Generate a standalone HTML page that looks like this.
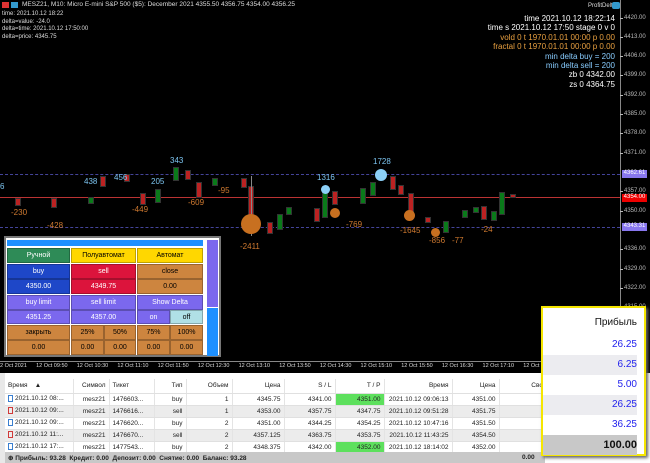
<!DOCTYPE html>
<html><head><meta charset="utf-8"><style>
*{margin:0;padding:0;box-sizing:border-box}
body{width:650px;height:463px;background:#000;position:relative;overflow:hidden;font-family:"Liberation Sans",sans-serif;font-size:7px;color:#fff}
.a{position:absolute}
.pl{position:absolute;left:624px;font-size:6px;color:#bbb}
.pl:before{content:"";position:absolute;left:-4px;top:3px;width:3px;height:1px;background:#bbb}
.c{position:absolute;border:1px solid #333}
.g{background:#0a7a1a}.r{background:#b22}
.w{position:absolute;width:1px;background:#888}
.lb{position:absolute;font-size:8px}
.bl{color:#7cc4f0}.or{color:#d07a30}
.b{position:absolute;display:flex;align-items:center;justify-content:center;font-size:7px;color:#fff;border:1px solid rgba(0,0,0,.25)}
table{border-collapse:collapse;table-layout:fixed}
.t td{height:12px;font-size:6.5px;color:#222;padding:0 3px;white-space:nowrap;overflow:hidden;border-right:1px solid #e4e4e4;border-bottom:1px solid #e0e0e0}
.t tr{height:12px}
.ib,.is{display:inline-block;width:5px;height:7px;vertical-align:middle;margin-right:2px}
.ib{border:1px solid #3a7fd0}.is{border:1px solid #d03a3a}
</style></head><body>
<div class="a" style="left:2px;top:2px;width:7px;height:6px;background:#d33"></div>
<div class="a" style="left:11px;top:2px;width:7px;height:6px;background:#39c"></div>
<div class="a" style="left:22px;top:1px;font-size:6.5px;color:#ddd">MESZ21, M10: Micro E-mini S&amp;P 500 ($5): December 2021 4355.50 4356.75 4354.00 4356.25</div>
<div class="a" style="left:2px;top:11px;font-size:6px;line-height:7.5px;color:#ddd">time: 2021.10.12 18:22<br>delta=value: -24.0<br>delta=time: 2021.10.12 17:50:00<br>delta=price: 4345.75</div>
<div class="a" style="left:588px;top:3px;font-size:6px;color:#ddd">ProfitDelta</div>
<div class="a" style="left:612px;top:2px;width:8px;height:7px;background:#39c;border-radius:2px"></div>
<div class="a" style="right:35px;top:14px;text-align:right;font-size:8px;line-height:9.4px;color:#fff">time 2021.10.12 18:22:14<br>time s 2021.10.12 17:50 stage 0 v 0<br><span style="color:#e9a040">vold 0 t 1970.01.01 00:00 p 0.00<br>fractal 0 t 1970.01.01 00:00 p 0.00</span><br><span style="color:#8cf">min delta buy = 200<br>min delta sell = 200</span><br>zb 0 4342.00<br>zs 0 4364.75</div>
<div class="a" style="left:620px;top:0;width:1px;height:373px;background:#888"></div>
<div class="pl" style="top:15px">4420.00</div><div class="pl" style="top:34px">4413.00</div><div class="pl" style="top:53px">4406.00</div><div class="pl" style="top:72px">4399.00</div><div class="pl" style="top:92px">4392.00</div><div class="pl" style="top:111px">4385.00</div><div class="pl" style="top:130px">4378.00</div><div class="pl" style="top:150px">4371.00</div><div class="pl" style="top:188px">4357.00</div><div class="pl" style="top:208px">4350.00</div><div class="pl" style="top:246px">4336.00</div><div class="pl" style="top:266px">4329.00</div><div class="pl" style="top:285px">4322.00</div><div class="pl" style="top:304px">4315.00</div><div class="pl" style="top:324px">4308.00</div><div class="pl" style="top:343px">4301.00</div>
<div class="a" style="left:0;top:174px;width:620px;border-top:1px dashed #44449a"></div>
<div class="a" style="left:0;top:227px;width:620px;border-top:1px dashed #44449a"></div>
<div class="a" style="left:0;top:197px;width:620px;height:1px;background:#b33"></div>
<div class="a" style="left:622px;top:170px;width:25px;height:8px;background:#8877ee;font-size:6px;color:#fff;text-align:center">4362.61</div>
<div class="a" style="left:622px;top:194px;width:25px;height:8px;background:#e00;font-size:6px;color:#fff;text-align:center">4354.00</div>
<div class="a" style="left:622px;top:223px;width:25px;height:8px;background:#8877ee;font-size:6px;color:#fff;text-align:center">4343.31</div>
<div class="c r" style="left:15px;top:198px;width:6px;height:8px"></div>
<div class="c r" style="left:51px;top:198px;width:6px;height:10px"></div>
<div class="c g" style="left:88px;top:197px;width:6px;height:7px"></div>
<div class="c r" style="left:100px;top:176px;width:6px;height:11px"></div>
<div class="c r" style="left:124px;top:174px;width:6px;height:8px"></div>
<div class="c r" style="left:140px;top:193px;width:6px;height:12px"></div>
<div class="c g" style="left:155px;top:189px;width:6px;height:14px"></div>
<div class="c g" style="left:173px;top:167px;width:6px;height:14px"></div>
<div class="c r" style="left:185px;top:170px;width:6px;height:10px"></div>
<div class="c r" style="left:196px;top:182px;width:6px;height:16px"></div>
<div class="c g" style="left:212px;top:178px;width:6px;height:8px"></div>
<div class="c r" style="left:241px;top:178px;width:6px;height:10px"></div>
<div class="c r" style="left:248px;top:186px;width:6px;height:42px"></div>
<div class="w" style="left:251px;top:176px;height:60px"></div>
<div class="c r" style="left:267px;top:222px;width:6px;height:12px"></div>
<div class="c g" style="left:277px;top:214px;width:6px;height:16px"></div>
<div class="c g" style="left:286px;top:207px;width:6px;height:8px"></div>
<div class="c r" style="left:314px;top:208px;width:6px;height:14px"></div>
<div class="c g" style="left:322px;top:186px;width:6px;height:32px"></div>
<div class="c r" style="left:332px;top:191px;width:6px;height:14px"></div>
<div class="c g" style="left:360px;top:188px;width:6px;height:16px"></div>
<div class="c g" style="left:370px;top:182px;width:6px;height:14px"></div>
<div class="c r" style="left:390px;top:176px;width:6px;height:14px"></div>
<div class="c r" style="left:398px;top:185px;width:6px;height:10px"></div>
<div class="c r" style="left:408px;top:193px;width:6px;height:24px"></div>
<div class="c r" style="left:425px;top:217px;width:6px;height:6px"></div>
<div class="c g" style="left:443px;top:221px;width:6px;height:12px"></div>
<div class="c g" style="left:462px;top:210px;width:6px;height:8px"></div>
<div class="c g" style="left:473px;top:207px;width:6px;height:6px"></div>
<div class="c r" style="left:481px;top:206px;width:6px;height:14px"></div>
<div class="c g" style="left:491px;top:211px;width:6px;height:10px"></div>
<div class="c g" style="left:499px;top:192px;width:6px;height:23px"></div>
<div class="c r" style="left:510px;top:194px;width:6px;height:4px"></div>
<div class="a" style="left:241px;top:214px;width:20px;height:20px;border-radius:50%;background:#c87020"></div>
<div class="a" style="left:330px;top:208px;width:10px;height:10px;border-radius:50%;background:#c87020"></div>
<div class="a" style="left:404px;top:210px;width:11px;height:11px;border-radius:50%;background:#c87020"></div>
<div class="a" style="left:431px;top:228px;width:9px;height:9px;border-radius:50%;background:#c87020"></div>
<div class="a" style="left:375px;top:169px;width:12px;height:12px;border-radius:50%;background:#8cd0f8"></div>
<div class="a" style="left:321px;top:185px;width:9px;height:9px;border-radius:50%;background:#8cd0f8"></div>
<div class="lb or" style="left:11px;top:208px">-230</div><div class="lb or" style="left:47px;top:221px">-428</div><div class="lb or" style="left:132px;top:205px">-449</div><div class="lb or" style="left:188px;top:198px">-609</div><div class="lb or" style="left:218px;top:186px">-95</div><div class="lb or" style="left:240px;top:242px">-2411</div><div class="lb or" style="left:346px;top:220px">-769</div><div class="lb or" style="left:400px;top:226px">-1645</div><div class="lb or" style="left:429px;top:236px">-856</div><div class="lb or" style="left:452px;top:236px">-77</div><div class="lb or" style="left:481px;top:225px">-24</div>
<div class="lb bl" style="left:0;top:182px">6</div><div class="lb bl" style="left:84px;top:177px">438</div><div class="lb bl" style="left:114px;top:173px">456</div><div class="lb bl" style="left:151px;top:177px">205</div><div class="lb bl" style="left:170px;top:156px">343</div><div class="lb bl" style="left:317px;top:173px">1316</div><div class="lb bl" style="left:373px;top:157px">1728</div>
<div class="a" style="left:4px;top:236px;width:217px;height:121px;background:#fff;border:2px solid #777"></div>
<div class="a" style="left:7px;top:240px;width:196px;height:6px;background:#1e90ff"></div>
<div class="a" style="left:207px;top:240px;width:11px;height:67px;background:#7b68ee"></div>
<div class="a" style="left:207px;top:308px;width:11px;height:48px;background:#1e90ff"></div>
<div class="b" style="left:7px;top:248px;width:63px;height:15px;background:#2e8b57">Ручной</div>
<div class="b" style="left:71px;top:248px;width:65px;height:15px;background:#ffd700;color:#000">Полуавтомат</div>
<div class="b" style="left:137px;top:248px;width:66px;height:15px;background:#ffd700;color:#000">Автомат</div>
<div class="b" style="left:7px;top:264px;width:63px;height:15px;background:#1e47c8">buy</div>
<div class="b" style="left:7px;top:279px;width:63px;height:15px;background:#1e47c8">4350.00</div>
<div class="b" style="left:71px;top:264px;width:65px;height:15px;background:#dc143c">sell</div>
<div class="b" style="left:71px;top:279px;width:65px;height:15px;background:#dc143c">4349.75</div>
<div class="b" style="left:137px;top:264px;width:66px;height:15px;background:#cd853f;color:#000">close</div>
<div class="b" style="left:137px;top:279px;width:66px;height:15px;background:#cd853f;color:#000">0.00</div>
<div class="b" style="left:7px;top:295px;width:63px;height:15px;background:#7b68ee">buy limit</div>
<div class="b" style="left:7px;top:310px;width:63px;height:14px;background:#7b68ee">4351.25</div>
<div class="b" style="left:71px;top:295px;width:65px;height:15px;background:#7b68ee">sell limit</div>
<div class="b" style="left:71px;top:310px;width:65px;height:14px;background:#7b68ee">4357.00</div>
<div class="b" style="left:137px;top:295px;width:66px;height:15px;background:#7b68ee">Show Delta</div>
<div class="b" style="left:137px;top:310px;width:33px;height:14px;background:#7b68ee">on</div>
<div class="b" style="left:170px;top:310px;width:33px;height:14px;background:#b0e0e6;color:#000">off</div>
<div class="b" style="left:7px;top:325px;width:63px;height:15px;background:#cd853f;color:#000">закрыть</div>
<div class="b" style="left:7px;top:340px;width:63px;height:15px;background:#cd853f;color:#000">0.00</div>
<div class="b" style="left:71px;top:325px;width:33px;height:15px;background:#cd853f;color:#000">25%</div>
<div class="b" style="left:104px;top:325px;width:32px;height:15px;background:#cd853f;color:#000">50%</div>
<div class="b" style="left:137px;top:325px;width:33px;height:15px;background:#cd853f;color:#000">75%</div>
<div class="b" style="left:170px;top:325px;width:33px;height:15px;background:#cd853f;color:#000">100%</div>
<div class="b" style="left:71px;top:340px;width:33px;height:15px;background:#cd853f;color:#000">0.00</div>
<div class="b" style="left:104px;top:340px;width:32px;height:15px;background:#cd853f;color:#000">0.00</div>
<div class="b" style="left:137px;top:340px;width:33px;height:15px;background:#cd853f;color:#000">0.00</div>
<div class="b" style="left:170px;top:340px;width:33px;height:15px;background:#cd853f;color:#000">0.00</div>
<div class="a" style="left:0;top:361px;width:620px;height:1px;background:#888"></div>
<div class="a" style="left:0;top:363px;font-size:5.5px;color:#ddd;white-space:nowrap">2 Oct 2021&nbsp;&nbsp;&nbsp;&nbsp;&nbsp;&nbsp;12 Oct 09:50&nbsp;&nbsp;&nbsp;&nbsp;&nbsp;&nbsp;12 Oct 10:30&nbsp;&nbsp;&nbsp;&nbsp;&nbsp;&nbsp;12 Oct 11:10&nbsp;&nbsp;&nbsp;&nbsp;&nbsp;&nbsp;12 Oct 11:50&nbsp;&nbsp;&nbsp;&nbsp;&nbsp;&nbsp;12 Oct 12:30&nbsp;&nbsp;&nbsp;&nbsp;&nbsp;&nbsp;12 Oct 13:10&nbsp;&nbsp;&nbsp;&nbsp;&nbsp;&nbsp;12 Oct 13:50&nbsp;&nbsp;&nbsp;&nbsp;&nbsp;&nbsp;12 Oct 14:30&nbsp;&nbsp;&nbsp;&nbsp;&nbsp;&nbsp;12 Oct 15:10&nbsp;&nbsp;&nbsp;&nbsp;&nbsp;&nbsp;12 Oct 15:50&nbsp;&nbsp;&nbsp;&nbsp;&nbsp;&nbsp;12 Oct 16:30&nbsp;&nbsp;&nbsp;&nbsp;&nbsp;&nbsp;12 Oct 17:10&nbsp;&nbsp;&nbsp;&nbsp;&nbsp;&nbsp;12 Oct 17:50</div>
<div class="a" style="left:0;top:373px;width:650px;height:90px;background:#fff"></div>
<div class="a" style="left:0;top:373px;width:5px;height:90px;background:#e8e8e8"></div>
<table class="t a" style="left:5px;top:379px;width:545px">
<colgroup><col style="width:68px"><col style="width:36px"><col style="width:45px"><col style="width:32px"><col style="width:46px"><col style="width:52px"><col style="width:51px"><col style="width:49px"><col style="width:68px"><col style="width:47px"><col style="width:51px"></colgroup>
<tr style="height:14px"><td>Время &nbsp;&nbsp;&nbsp;&#9650;</td><td align=right>Символ</td><td>Тикет</td><td align=right>Тип</td><td align=right>Объем</td><td align=right>Цена</td><td align=right>S / L</td><td align=right>T / P</td><td align=right>Время</td><td align=right>Цена</td><td align=right>Своп</td></tr>
<tr><td><span class="ib"></span>2021.10.12 08:...</td><td align=right>mesz21</td><td>1476603...</td><td align=right>buy</td><td align=right>1</td><td align=right>4345.75</td><td align=right>4341.00</td><td align=right style="background:#5de05d">4351.00</td><td align=right>2021.10.12 09:06:13</td><td align=right>4351.00</td><td></td></tr>
<tr style="background:#ececec"><td><span class="is"></span>2021.10.12 09:...</td><td align=right>mesz21</td><td>1476616...</td><td align=right>sell</td><td align=right>1</td><td align=right>4353.00</td><td align=right>4357.75</td><td align=right>4347.75</td><td align=right>2021.10.12 09:51:28</td><td align=right>4351.75</td><td></td></tr>
<tr><td><span class="ib"></span>2021.10.12 09:...</td><td align=right>mesz21</td><td>1476620...</td><td align=right>buy</td><td align=right>2</td><td align=right>4351.00</td><td align=right>4344.25</td><td align=right>4354.25</td><td align=right>2021.10.12 10:47:16</td><td align=right>4351.50</td><td></td></tr>
<tr style="background:#ececec"><td><span class="is"></span>2021.10.12 11:...</td><td align=right>mesz21</td><td>1476670...</td><td align=right>sell</td><td align=right>2</td><td align=right>4357.125</td><td align=right>4363.75</td><td align=right>4353.75</td><td align=right>2021.10.12 11:43:25</td><td align=right>4354.50</td><td></td></tr>
<tr><td><span class="ib"></span>2021.10.12 17:...</td><td align=right>mesz21</td><td>1477543...</td><td align=right>buy</td><td align=right>2</td><td align=right>4348.375</td><td align=right>4342.00</td><td align=right style="background:#5de05d">4352.00</td><td align=right>2021.10.12 18:14:02</td><td align=right>4352.00</td><td></td></tr>
</table>
<div class="a" style="left:5px;top:452px;width:540px;height:11px;background:#c8c8c8;font-size:6.5px;color:#222;font-weight:bold;padding:2px 0 0 3px">⊕ Прибыль: 93.28 &nbsp;Кредит: 0.00 &nbsp;Депозит: 0.00 &nbsp;Снятие: 0.00 &nbsp;Баланс: 93.28<span style="position:absolute;left:517px">0.00</span></div>
<div class="a" style="left:541px;top:306px;width:105px;height:150px;background:#fff;border:2px solid #f5e600;box-shadow:2px 2px 3px #666"></div>
<div class="a" style="left:543px;top:308px;width:101px;font-size:10px;text-align:right;padding-right:7px;line-height:20px">
<div style="color:#111;height:27px;line-height:30px">Прибыль</div>
<div style="color:#22e;background:#fff">26.25</div>
<div style="color:#22e;background:#ececf0">6.25</div>
<div style="color:#22e;background:#fff">5.00</div>
<div style="color:#22e;background:#ececf0">26.25</div>
<div style="color:#22e;background:#fff">36.25</div>
<div style="color:#111;background:#c8c8c8;font-weight:bold;font-size:11px">100.00</div>
</div>
</body></html>
